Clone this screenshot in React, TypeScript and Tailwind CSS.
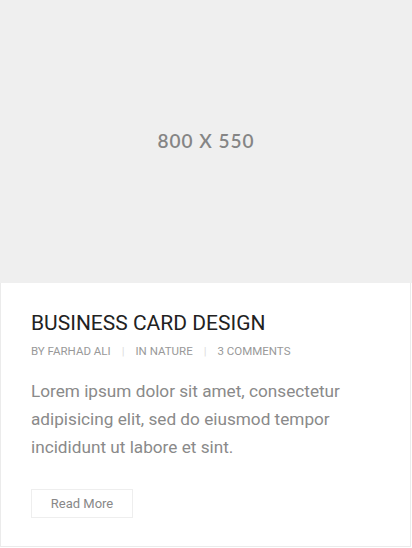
const meta = ["By Farhad Ali", "In Nature", "3 Comments"];

const App = () => {
  return (
    <div className="w-[412px] h-[548px] bg-white font-['Roboto',sans-serif]">
      <div className="h-[283px] bg-[#efefef] flex items-center justify-center">
        <span className="text-[19px] font-semibold tracking-[1px] text-[#858585] font-['Lato',sans-serif]">
          800 X 550
        </span>
      </div>
      <div className="w-[411px] h-[264px] border border-t-0 border-[#ebebeb] px-[30px] pt-[27px]">
        <h2 className="text-[21px] leading-[26px] text-[#222] uppercase">Business Card Design</h2>
        <div className="flex items-center mt-[8px] text-[11.5px] leading-[14px] text-[#999] uppercase">
          {meta.map((m, i) => (
            <span key={m} className="flex items-center">
              {i > 0 && <span className="text-[#ddd] px-[11px]">|</span>}
              {m}
            </span>
          ))}
        </div>
        <p className="mt-[19px] text-[17.2px] leading-[28px] text-[#8a8a8a] w-[330px]">
          Lorem ipsum dolor sit amet, consectetur adipisicing elit, sed do eiusmod tempor incididunt ut labore et sint.
        </p>
        <button className="mt-[28px] w-[102px] h-[29px] border border-[#eee] text-[13px] text-[#888]">
          Read More
        </button>
      </div>
    </div>
  );
};

export default App;
